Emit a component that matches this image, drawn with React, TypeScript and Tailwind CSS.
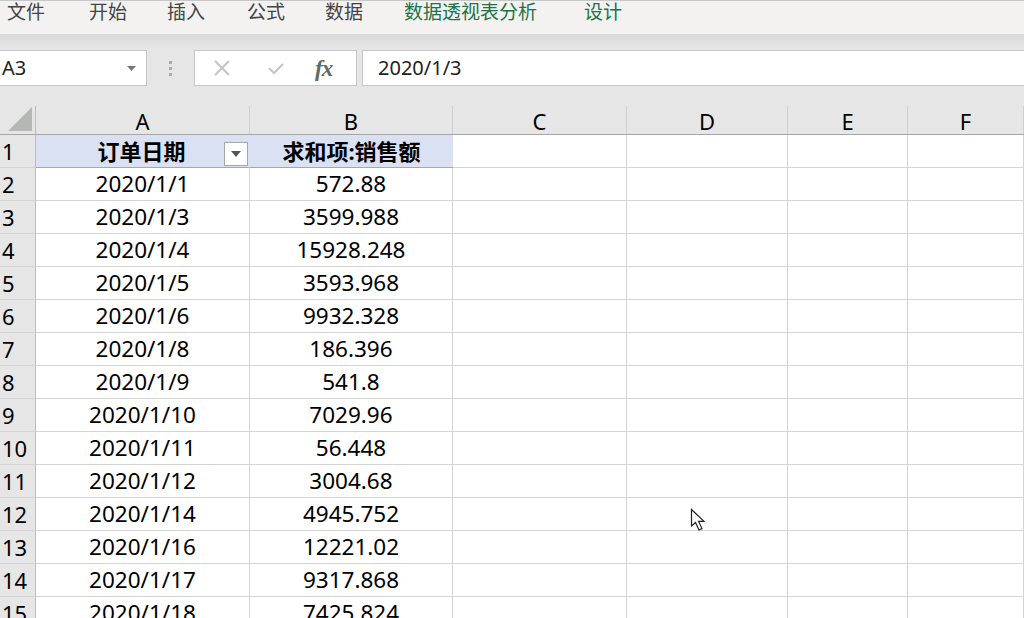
import React from 'react'

const cols = [
  { name: 'A', w: 'w-[214px]' },
  { name: 'B', w: 'w-[203px]' },
  { name: 'C', w: 'w-[174px]' },
  { name: 'D', w: 'w-[161px]' },
  { name: 'E', w: 'w-[120px]' },
  { name: 'F', w: 'flex-1' },
]

const rows: [string, string][] = [
  ['2020/1/1', '572.88'],
  ['2020/1/3', '3599.988'],
  ['2020/1/4', '15928.248'],
  ['2020/1/5', '3593.968'],
  ['2020/1/6', '9932.328'],
  ['2020/1/8', '186.396'],
  ['2020/1/9', '541.8'],
  ['2020/1/10', '7029.96'],
  ['2020/1/11', '56.448'],
  ['2020/1/12', '3004.68'],
  ['2020/1/14', '4945.752'],
  ['2020/1/16', '12221.02'],
  ['2020/1/17', '9317.868'],
  ['2020/1/18', '7425.824'],
]

const tabs = [
  { label: '文件', x: 'w-[82px]' },
  { label: '开始', x: 'w-[78px]' },
  { label: '插入', x: 'w-[80px]' },
  { label: '公式', x: 'w-[78px]' },
  { label: '数据', x: 'w-[79px]' },
]

const font = { fontFamily: '"Noto Sans", "Noto Sans CJK SC", sans-serif' }

function RowHead({ n }: { n: number }) {
  return (
    <div className="w-[36px] shrink-0 bg-[#e6e6e6] border-r border-[#bdbdbd] border-b border-b-[#d4d4d4] pl-[2px] flex items-center text-[22px] text-black">
      {n}
    </div>
  )
}

function Cursor() {
  return (
    <svg className="absolute left-[690px] top-[508px]" width="20" height="30" viewBox="0 0 20 30">
      <path
        d="M1.5 1.5 L1.5 18 L5.5 14.5 L9 22 L12 20.6 L8.6 13.4 L14 13.4 Z"
        fill="#fff"
        stroke="#222"
        strokeWidth="1.2"
        strokeLinejoin="miter"
      />
    </svg>
  )
}

export default function App() {
  return (
    <div className="relative w-[1024px] h-[618px] overflow-hidden bg-white" style={font}>
      {/* ribbon tabs */}
      <div className="h-[34px] bg-[#f3f2f1] border-t border-[#c8c8c8] flex items-center pl-[7px] text-[19px] leading-none pb-[10px]">
        {tabs.map(t => (
          <div key={t.label} className={`${t.x} text-[#444]`}>{t.label}</div>
        ))}
        <div className="w-[180px] text-[#217346]">数据透视表分析</div>
        <div className="text-[#217346]">设计</div>
      </div>

      {/* formula bar */}
      <div className="h-[72px] bg-gradient-to-b from-[#d9d9d9] via-[#e6e6e6] via-[20%] to-[#e6e6e6] pt-[16px]">
        <div className="flex items-stretch h-[36px]">
          <div className="w-[147px] bg-white border border-[#c6c6c6] border-l-0 flex items-center justify-between pl-[2px] pr-[10px] text-[20px] text-[#222]">
            <span>A3</span>
            <svg width="9" height="5" viewBox="0 0 9 5"><path d="M0 0 H9 L4.5 5 Z" fill="#777" /></svg>
          </div>
          <div className="w-[47px] flex flex-col items-center justify-center gap-[3px]">
            <span className="w-[3px] h-[3px] bg-[#aaa]" />
            <span className="w-[3px] h-[3px] bg-[#aaa]" />
            <span className="w-[3px] h-[3px] bg-[#aaa]" />
          </div>
          <div className="w-[163px] bg-white border border-[#c6c6c6] flex items-center">
            <svg className="ml-[19px]" width="16" height="16" viewBox="0 0 16 16">
              <path d="M1 1 L15 15 M15 1 L1 15" stroke="#c4c4c4" strokeWidth="2" />
            </svg>
            <svg className="ml-[38px]" width="16" height="14" viewBox="0 0 16 14">
              <path d="M1 7 L6 12 L15 3" stroke="#c4c4c4" strokeWidth="2" fill="none" />
            </svg>
            <span
              className="ml-[31px] text-[23px] italic font-bold text-[#5e6b63] tracking-[-1px] leading-none"
              style={{ fontFamily: '"Liberation Serif", serif' }}
            >
              fx
            </span>
          </div>
          <div className="w-[5px]" />
          <div className="flex-1 bg-white border border-[#c6c6c6] border-r-0 flex items-center pl-[15px] text-[20px] text-[#222]">
            2020/1/3
          </div>
        </div>
      </div>

      {/* column headers */}
      <div className="flex h-[29px] bg-[#e6e6e6] border-b border-[#a6a6a6]">
        <div className="w-[36px] shrink-0 border-r border-[#bdbdbd] flex items-end justify-end p-[3px]">
          <svg width="24" height="24" viewBox="0 0 24 24"><path d="M24 0 V24 H0 Z" fill="#b3b8b5" /></svg>
        </div>
        {cols.map(c => (
          <div key={c.name} className={`${c.w} shrink-0 border-r border-[#cfcfcf] flex items-center justify-center text-[22px] text-black pt-[2px]`}>
            {c.name}
          </div>
        ))}
      </div>

      {/* row 1: pivot header */}
      <div className="flex h-[33px]">
        <RowHead n={1} />
        <div className="w-[214px] shrink-0 bg-[#d9e1f2] border-b border-[#8ea9db] border-r border-r-[#d9e1f2] flex items-center relative">
          <span className="flex-1 text-center font-bold text-[22px] pr-[2px]">订单日期</span>
          <div className="absolute right-[1px] top-[7px] w-[24px] h-[24px] bg-white border border-[#a6a6a6] flex items-center justify-center">
            <svg width="10" height="6" viewBox="0 0 10 6"><path d="M0 0 H10 L5 6 Z" fill="#4e5a54" /></svg>
          </div>
        </div>
        <div className="w-[203px] shrink-0 bg-[#d9e1f2] border-b border-[#8ea9db] flex items-center justify-center font-bold text-[22px]">
          求和项:销售额
        </div>
        {cols.slice(2).map(c => (
          <div key={c.name} className={`${c.w} shrink-0 border-r border-b border-[#d4d4d4]`} />
        ))}
      </div>

      {rows.map(([d, v], i) => (
        <div key={d} className="flex h-[33px]">
          <RowHead n={i + 2} />
          <div className="w-[214px] shrink-0 border-r border-b border-[#d4d4d4] flex items-center justify-center text-[22.5px] text-black">
            {d}
          </div>
          <div className="w-[203px] shrink-0 border-r border-b border-[#d4d4d4] flex items-center justify-center text-[22.5px] text-black">
            {v}
          </div>
          {cols.slice(2).map(c => (
            <div key={c.name} className={`${c.w} shrink-0 border-r border-b border-[#d4d4d4]`} />
          ))}
        </div>
      ))}

      <Cursor />
    </div>
  )
}
